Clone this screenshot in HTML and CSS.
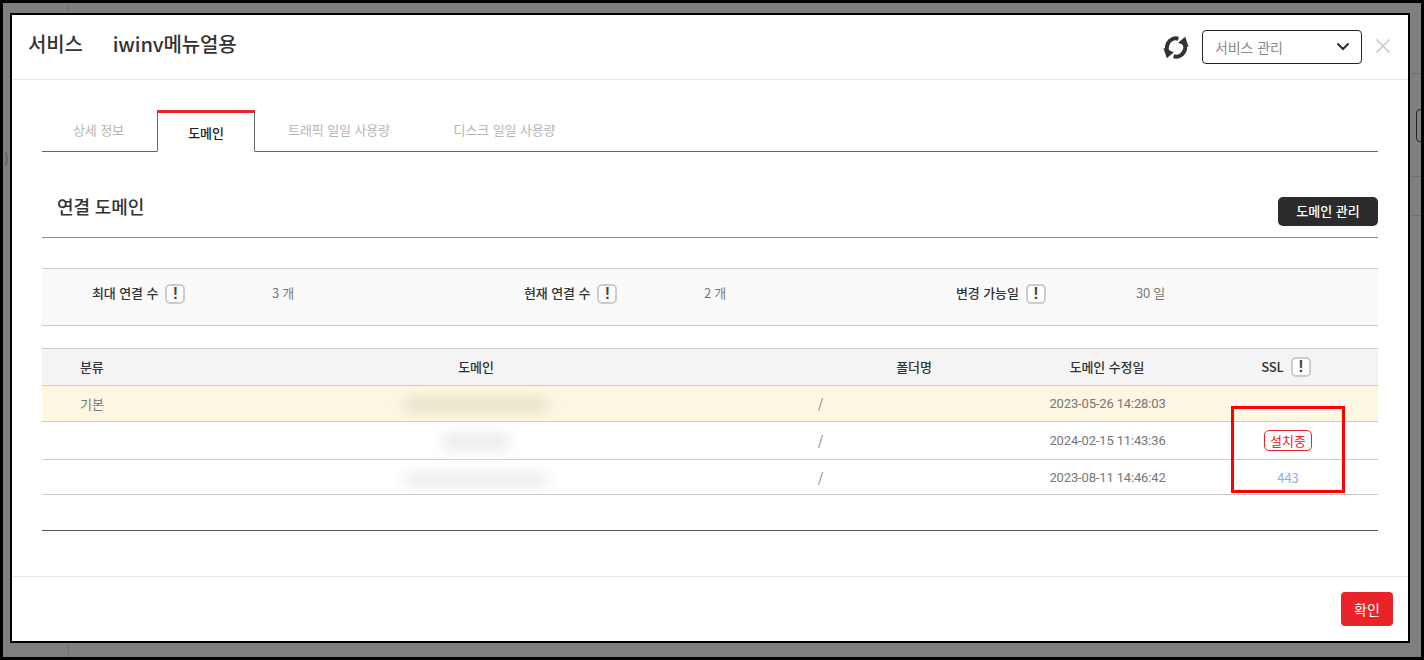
FILE: index.html
```html
<!DOCTYPE html>
<html lang="ko">
<head>
<meta charset="utf-8">
<title>서비스</title>
<link rel="stylesheet" href="styles.css">
</head>
<body>
<div class="screen">
  <div class="backdrop" aria-hidden="true">
    <span class="bd-v bd-v1"></span>
    <span class="bd-v bd-v2"></span>
    <span class="bd-h bd-h1"></span>
    <span class="bd-h bd-h2"></span>
    <span class="bd-h bd-h3"></span>
    <span class="bd-btn"></span>
    <span class="bd-paren">)</span>
  </div>
  <section class="modal">
    <header class="modal-head">
      <h1 class="title"><span>서비스</span><span>iwinv메뉴얼용</span></h1>
      <div class="head-tools">
        <svg class="refresh" viewBox="0 0 24 25">
          <path class="refresh-arc" d="M14.200 4.300A8.500 8.500 0 0 0 6 18.500"/>
          <path class="refresh-arc" d="M9.800 20.700A8.500 8.500 0 0 0 18 6.500"/>
          <path d="M0.300 13L10 17 3.500 22.500Z"/>
          <path d="M23.700 12L14 8 20.500 2.500Z"/>
        </svg>
        <div class="select">
          <span>서비스 관리</span>
          <svg class="chev" viewBox="0 0 14 9"><path d="M1.500 1.500 7 7l5.500-5.500"/></svg>
        </div>
        <svg class="close" viewBox="0 0 16 16"><path d="M1.500 1.500l13 13M14.500 1.500l-13 13"/></svg>
      </div>
    </header>

    <main class="modal-body">
      <nav class="tabs">
        <a class="tab tab-1">상세 정보</a>
        <a class="tab tab-active">도메인</a>
        <a class="tab tab-3">트래픽 일일 사용량</a>
        <a class="tab tab-4">디스크 일일 사용량</a>
      </nav>

      <div class="section-head">
        <h2>연결 도메인</h2>
        <button class="btn-dark">도메인 관리</button>
      </div>

      <div class="info">
        <div class="info-item">
          <span class="info-label">최대 연결 수<i class="bang">!</i></span>
          <span class="info-value">3 개</span>
        </div>
        <div class="info-item">
          <span class="info-label">현재 연결 수<i class="bang">!</i></span>
          <span class="info-value">2 개</span>
        </div>
        <div class="info-item">
          <span class="info-label">변경 가능일<i class="bang">!</i></span>
          <span class="info-value">30 일</span>
        </div>
      </div>

      <div class="grid-table">
        <div class="row row-head">
          <div class="c-type">분류</div>
          <div class="c-domain">도메인</div>
          <div class="c-folder">폴더명</div>
          <div class="c-date">도메인 수정일</div>
          <div class="c-ssl">SSL<i class="bang">!</i></div>
        </div>
        <div class="row row-1 row-base">
          <div class="c-type">기본</div>
          <div class="c-domain"><span class="blur blur-long tint"></span></div>
          <div class="c-folder">/</div>
          <div class="c-date">2023-05-26 14:28:03</div>
          <div class="c-ssl"></div>
        </div>
        <div class="row row-2">
          <div class="c-type"></div>
          <div class="c-domain"><span class="blur blur-short"></span></div>
          <div class="c-folder">/</div>
          <div class="c-date">2024-02-15 11:43:36</div>
          <div class="c-ssl"><span class="badge">설치중</span></div>
        </div>
        <div class="row row-3">
          <div class="c-type"></div>
          <div class="c-domain"><span class="blur blur-long"></span></div>
          <div class="c-folder">/</div>
          <div class="c-date">2023-08-11 14:46:42</div>
          <div class="c-ssl"><a class="port">443</a></div>
        </div>
      </div>
      <div class="table-end"></div>
    </main>

    <footer class="modal-foot">
      <button class="btn-red">확인</button>
    </footer>

    <div class="annotation" aria-hidden="true"></div>
  </section>
</div>
</body>
</html>
```
FILE: styles.css
```css
* { box-sizing: border-box; }
html, body { margin: 0; padding: 0; }
body {
  font-family: "Noto Sans CJK KR", "Noto Sans", sans-serif;
  color: #333;
  overflow: hidden;
}
.screen {
  position: relative;
  width: 1424px;
  height: 660px;
  background: #7f7f7f;
  border: 3px solid #000;
  padding: 10px 0 0 7px;
}
.backdrop { position: absolute; inset: 0; overflow: hidden; }
.bd-v { position: absolute; width: 1px; background: #6f6f6f; }
.bd-v1 { left: 65px; top: 0; height: 10px; }
.bd-v2 { left: 65px; bottom: 0; height: 14px; }
.bd-h { position: absolute; left: 1407px; width: 14px; height: 1px; background: #6f6f6f; }
.bd-h1 { top: 70px; }
.bd-h2 { top: 173px; }
.bd-h3 { top: 212px; }
.bd-btn {
  position: absolute; left: 1413px; top: 106px; width: 12px; height: 33px;
  border: 1px solid #222; border-radius: 4px;
}
.bd-paren { position: absolute; left: 1px; top: 145px; font-size: 14px; color: #4a5a7a; }

.modal {
  position: relative;
  width: 1400px;
  height: 630px;
  background: #fff;
  border: 2px solid #000;
  display: flex;
  flex-direction: column;
}

/* header */
.modal-head {
  height: 65px;
  flex: none;
  border-bottom: 1px solid #e6e6e6;
  display: flex;
  align-items: center;
  justify-content: space-between;
  padding: 0 17px 6px 16px;
}
.title {
  margin: 0;
  font-size: 20px;
  font-weight: 500;
  color: #333;
  display: flex;
  gap: 30px;
  letter-spacing: -.15px;
  line-height: 30px;
}
.head-tools { display: flex; align-items: center; }
.refresh { width: 26px; height: 27px; fill: #333; margin-top: 6px; }
.refresh-arc { fill: none; stroke: #333; stroke-width: 3.800; }
.select {
  width: 160px;
  height: 34px;
  margin-left: 13px;
  border: 1px solid #222;
  border-radius: 4px;
  display: flex;
  align-items: center;
  justify-content: space-between;
  padding: 0 11px 0 12px;
  font-size: 14px;
  letter-spacing: -.1px;
  color: #888;
  margin-top: 5px;
}
.chev { width: 14px; height: 9px; fill: none; stroke: #1f2a44; stroke-width: 2; }
.close { width: 16px; height: 16px; margin-left: 13px; fill: none; stroke: #c8c8c8; stroke-width: 1.500; margin-top: 4px; }

/* body */
.modal-body { flex: 1; padding: 30px 30px 0; }
.tabs {
  height: 42px;
  border-bottom: 1px solid #666;
  display: flex;
  align-items: stretch;
}
.tab {
  font-size: 13px;
  color: #b5b5b5;
  display: flex;
  align-items: center;
  justify-content: center;
  letter-spacing: -.1px;
  padding-bottom: 2px;
}
.tab-1 { width: 115px; padding-right: 2px; }
.tab-active {
  width: 98px;
  height: 42px;
  border: 1px solid #666;
  border-top: 3px solid #e8232a;
  border-bottom: 1px solid #fff;
  color: #222;
  font-weight: 500;
  padding: 1px 0 0;
}
.tab-3 { width: 168px; }
.tab-4 { width: 163px; }

.section-head {
  height: 86px;
  border-bottom: 1px solid #888;
  display: flex;
  align-items: center;
  justify-content: space-between;
  padding: 26px 0 0 15px;
}
.section-head h2 { margin: 0 0 4px; font-size: 18px; font-weight: 500; color: #333; line-height: 26px; letter-spacing: -.1px; }
.btn-dark {
  width: 100px;
  height: 29px;
  margin-top: 7px;
  border: 0;
  border-radius: 5px;
  background: #2b2b2b;
  color: #fff;
  font: 500 13px "Noto Sans CJK KR", sans-serif;
  padding: 0 0 1px;
}

.info {
  margin-top: 30px;
  height: 58px;
  background: #fafafa;
  border-top: 1px solid #ccc;
  border-bottom: 1px solid #ccc;
  display: grid;
  grid-template-columns: repeat(3, 432px);
  padding: 0 0 6px 50px;
  align-items: center;
}
.info-item { display: flex; align-items: center; font-size: 13px; }
.info-label { width: 180px; display: flex; align-items: center; font-weight: 500; color: #333; letter-spacing: -.1px; padding-bottom: 3px; }
.info-value { color: #777; font-size: 13px; letter-spacing: -.3px; padding-bottom: 3px; }
.bang {
  width: 20px;
  height: 20px;
  margin-left: 7px;
  border: 2px solid #ccc;
  border-radius: 5px;
  background: #fff;
  color: #444;
  font: 700 16px/16px "Liberation Sans", sans-serif;
  text-align: center;
}
.info-label .bang { margin-top: 3px; }

/* table */
.grid-table { margin-top: 22px; border-top: 1px solid #ccc; }
.row {
  display: grid;
  grid-template-columns: 93px 682px 199px 182px 180px;
  align-items: center;
  font-size: 13px;
  color: #777;
  border-bottom: 1px solid #ccc;
  text-align: center;
}
.row-head { height: 37px; background: #f4f4f4; font-weight: 500; color: #333; padding-bottom: 1px; letter-spacing: -.1px; }
.row-1 { height: 36px; }
.row-2 { height: 38px; }
.row-3 { height: 35px; }
.row-base { background: #fdf6e3; }
.c-type { text-align: left; padding-left: 38px; }
.row .c-folder { text-align: left; padding-left: 1px; }
.row-head .c-folder { text-align: center; padding: 0 5px 0 0; }
.row:not(.row-head) .c-date { font-family: Roboto, sans-serif; letter-spacing: -.15px; padding-left: 1px; }
.row-head .c-ssl { display: flex; align-items: center; justify-content: center; padding-right: 4px; }
.blur {
  display: inline-block;
  height: 14px;
  background: #e2e2e2;
  filter: blur(7px);
  opacity: .7;
  vertical-align: middle;
}
.blur-long { width: 142px; }
.blur-short { width: 66px; height: 17px; }
.tint { background: #d8d8b8; }
.badge {
  display: inline-block;
  border: 1px solid #e8232a;
  border-radius: 5px;
  color: #e8232a;
  font-size: 13px;
  line-height: 19px;
  padding: 0 5px;
}
.port { color: #85b0e6; font-size: 13px; }
.table-end { margin-top: 35px; border-top: 1px solid #555; }

/* footer */
.modal-foot {
  height: 65px;
  flex: none;
  border-top: 1px solid #e6e6e6;
  display: flex;
  justify-content: flex-end;
  align-items: flex-start;
  padding: 15px 15px 0 0;
}
.btn-red {
  width: 52px;
  height: 34px;
  border: 0;
  border-radius: 4px;
  background: #e8232a;
  color: #fff;
  font: 400 14px "Noto Sans CJK KR", sans-serif;
  padding: 0;
}

/* red annotation rectangle drawn over the table */
.annotation {
  position: absolute;
  left: 1219px;
  top: 391px;
  width: 114px;
  height: 87px;
  border: 3px solid #f00;
}
```
